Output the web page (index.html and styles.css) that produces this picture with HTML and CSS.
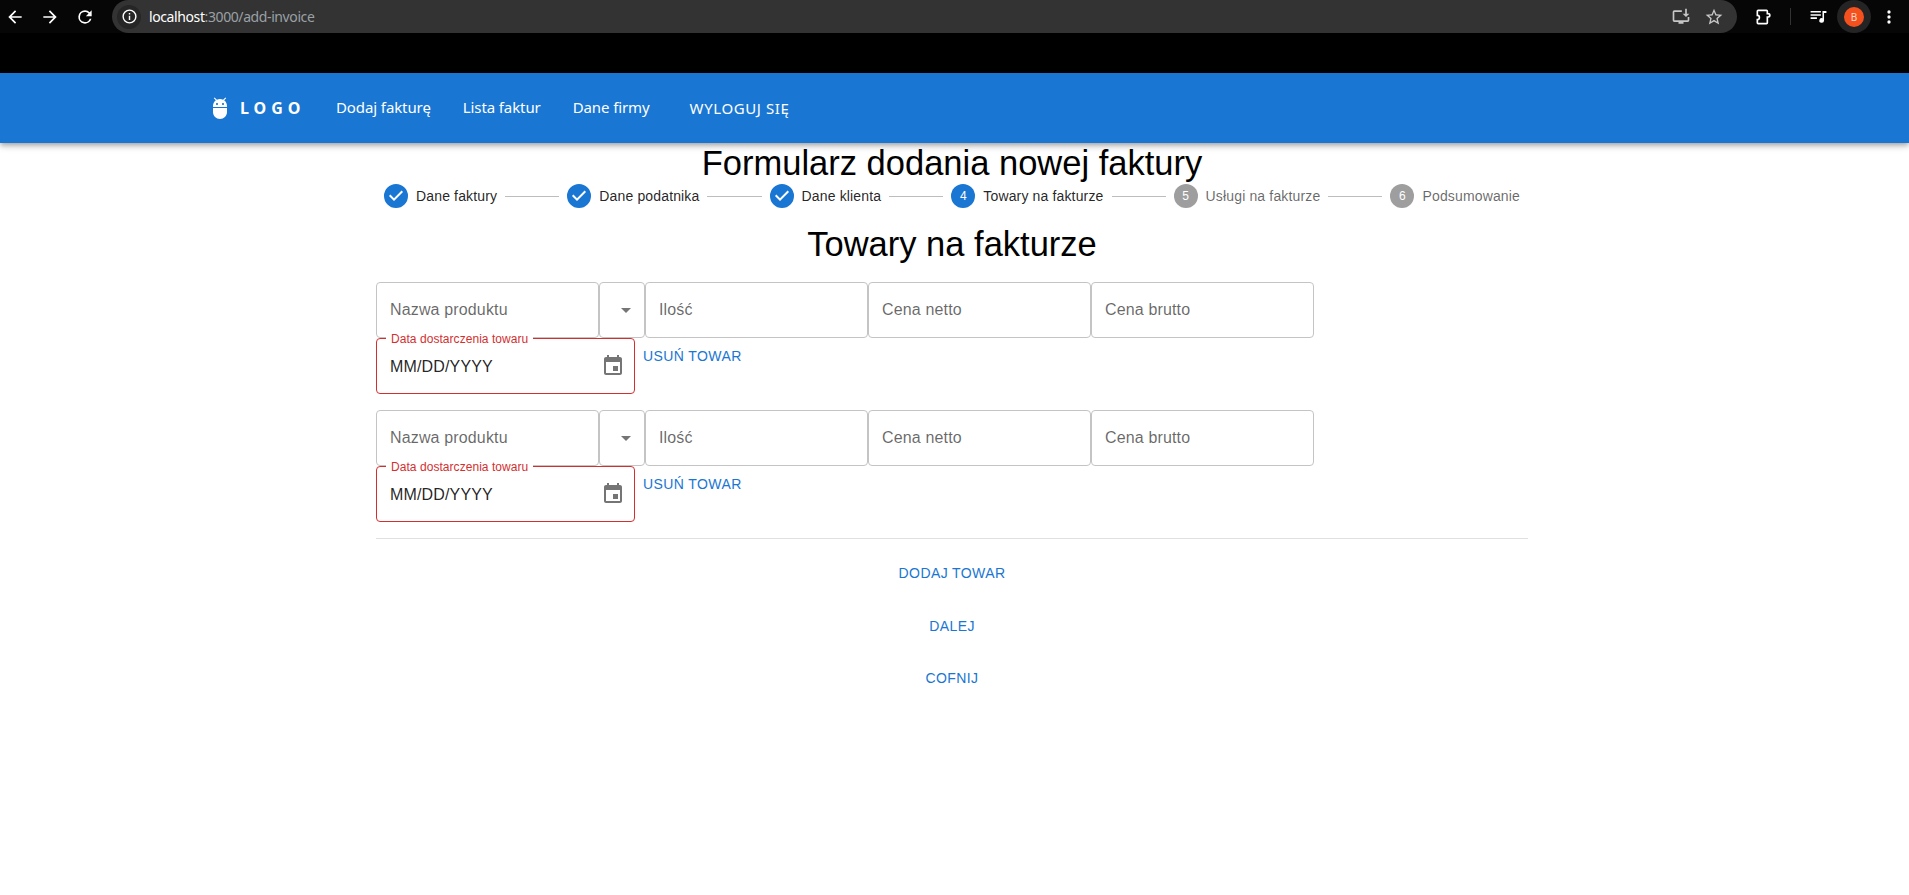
FILE: index.html
```html
<!DOCTYPE html>
<html lang="en">
<head>
    <meta charset="UTF-8">
    <meta name="viewport" content="width=device-width, initial-scale=1.0">
    <title>Formularz dodania nowej faktury</title>
    <link rel="stylesheet" href="styles.css">
</head>
<body>

<div class="browser-bar">
    <div class="browser-nav">
        <svg class="browser-icon" viewBox="0 0 24 24"><path d="M20 11H7.830l5.590-5.590L12 4l-8 8 8 8 1.410-1.410L7.830 13H20z"/></svg>
        <svg class="browser-icon" viewBox="0 0 24 24"><path d="M4 11h12.170l-5.590-5.590L12 4l8 8-8 8-1.410-1.410L16.170 13H4z"/></svg>
        <svg class="browser-icon" viewBox="0 0 24 24"><path d="M17.650 6.350A7.960 7.960 0 0 0 12 4a8 8 0 1 0 7.730 10h-2.080A6 6 0 1 1 12 6c1.660 0 3.140.69 4.220 1.780L13 11h7V4z"/></svg>
    </div>
    <div class="address-bar">
        <span class="info-chip">
            <svg viewBox="0 0 24 24"><path d="M11 7h2v2h-2zm0 4h2v6h-2zm1-9a10 10 0 1 0 0 20 10 10 0 0 0 0-20zm0 18a8 8 0 1 1 0-16 8 8 0 0 1 0 16z"/></svg>
        </span>
        <span class="url"><span class="url-host">localhost</span>:3000/add-invoice</span>
        <span class="address-actions">
            <svg class="address-icon" viewBox="0 0 24 24"><path d="M4 4h9v2H4v10h16v-4h2v4a2 2 0 0 1-2 2h-5v2H9v-2H4a2 2 0 0 1-2-2V6a2 2 0 0 1 2-2zm13-2h2v6h3l-4 4-4-4h3z"/></svg>
            <svg class="address-icon" viewBox="0 0 24 24"><path d="M22 9.240l-7.190-.62L12 2 9.190 8.630 2 9.240l5.460 4.730L5.820 21 12 17.270 18.180 21l-1.630-7.030L22 9.240zM12 15.400l-3.760 2.270 1-4.280-3.320-2.880 4.380-.38L12 6.100l1.710 4.040 4.380.38-3.320 2.880 1 4.280L12 15.400z"/></svg>
        </span>
    </div>
    <div class="browser-tools">
        <svg class="browser-icon puzzle" viewBox="0 0 24 24"><path d="M5 4h10a1 1 0 0 1 1 1v3h1a2 2 0 0 1 0 4h-1v7a1 1 0 0 1-1 1H5a1 1 0 0 1-1-1v-4a2.500 2.500 0 0 0 0-5V5a1 1 0 0 1 1-1z" fill="none" stroke="#fff" stroke-width="2"/></svg>
        <span class="tools-divider"></span>
        <svg class="browser-icon media" viewBox="0 0 24 24"><path d="M2 5h13v2H2zm0 4h13v2H2zm0 4h8v2H2zm15-8h5v2.500h-3V17a3 3 0 1 1-2-2.800z"/></svg>
        <span class="avatar-wrap"><span class="avatar">B</span></span>
        <svg class="browser-icon dots" viewBox="0 0 24 24"><path d="M12 8a2 2 0 1 0 0-4 2 2 0 0 0 0 4zm0 2a2 2 0 1 0 0 4 2 2 0 0 0 0-4zm0 6a2 2 0 1 0 0 4 2 2 0 0 0 0-4z"/></svg>
    </div>
</div>
<div class="black-strip"></div>

<header class="app-bar">
    <svg class="logo-icon" viewBox="0 0 24 24"><path d="M5 16c0 3.870 3.130 7 7 7s7-3.130 7-7v-4H5v4zM16.120 4.370l2.100-2.100-.82-.83-2.300 2.310C14.160 3.280 13.120 3 12 3s-2.160.28-3.090.75L6.600 1.440l-.82.83 2.100 2.100C6.140 5.640 5 7.680 5 10v1h14v-1c0-2.320-1.140-4.360-2.880-5.630zM9 9c-.55 0-1-.45-1-1s.45-1 1-1 1 .45 1 1-.45 1-1 1zm6 0c-.55 0-1-.45-1-1s.45-1 1-1 1 .45 1 1-.45 1-1 1z"/></svg>
    <span class="logo-text">LOGO</span>
    <nav class="nav-links">
        <a class="nav-link">Dodaj fakturę</a>
        <a class="nav-link">Lista faktur</a>
        <a class="nav-link">Dane firmy</a>
    </nav>
    <a class="logout">WYLOGUJ SIĘ</a>
</header>

<main class="page">
    <h1 class="title">Formularz dodania nowej faktury</h1>

    <div class="stepper">
        <div class="step">
            <svg class="step-check" viewBox="0 0 24 24"><path d="M12 0a12 12 0 1 0 0 24 12 12 0 0 0 0-24zm-2 17l-5-5 1.400-1.400 3.600 3.600 7.600-7.600L19 8l-9 9z"/></svg>
            <span class="step-label">Dane faktury</span>
        </div>
        <div class="connector"></div>
        <div class="step">
            <svg class="step-check" viewBox="0 0 24 24"><path d="M12 0a12 12 0 1 0 0 24 12 12 0 0 0 0-24zm-2 17l-5-5 1.400-1.400 3.600 3.600 7.600-7.600L19 8l-9 9z"/></svg>
            <span class="step-label">Dane podatnika</span>
        </div>
        <div class="connector"></div>
        <div class="step">
            <svg class="step-check" viewBox="0 0 24 24"><path d="M12 0a12 12 0 1 0 0 24 12 12 0 0 0 0-24zm-2 17l-5-5 1.400-1.400 3.600 3.600 7.600-7.600L19 8l-9 9z"/></svg>
            <span class="step-label">Dane klienta</span>
        </div>
        <div class="connector"></div>
        <div class="step">
            <span class="step-num active">4</span>
            <span class="step-label">Towary na fakturze</span>
        </div>
        <div class="connector"></div>
        <div class="step">
            <span class="step-num">5</span>
            <span class="step-label muted">Usługi na fakturze</span>
        </div>
        <div class="connector"></div>
        <div class="step">
            <span class="step-num">6</span>
            <span class="step-label muted">Podsumowanie</span>
        </div>
    </div>

    <h2 class="subtitle">Towary na fakturze</h2>

    <section class="product">
        <div class="field-row">
            <div class="field wide">Nazwa produktu</div>
            <div class="field select"><svg viewBox="0 0 24 24"><path d="M7 10l5 5 5-5z"/></svg></div>
            <div class="field wide">Ilość</div>
            <div class="field wide">Cena netto</div>
            <div class="field wide">Cena brutto</div>
        </div>
        <div class="date-row">
            <div class="date-field">
                <span class="date-label">Data dostarczenia towaru</span>
                <span class="date-value">MM/DD/YYYY</span>
                <svg class="date-icon" viewBox="0 0 24 24"><path d="M17 12h-5v5h5v-5zM16 1v2H8V1H6v2H5c-1.110 0-1.990.9-1.990 2L3 19c0 1.100.89 2 2 2h14c1.100 0 2-.9 2-2V5c0-1.100-.9-2-2-2h-1V1h-2zm3 18H5V8h14v11z"/></svg>
            </div>
            <button class="text-btn">Usuń towar</button>
        </div>
    </section>

    <section class="product">
        <div class="field-row">
            <div class="field wide">Nazwa produktu</div>
            <div class="field select"><svg viewBox="0 0 24 24"><path d="M7 10l5 5 5-5z"/></svg></div>
            <div class="field wide">Ilość</div>
            <div class="field wide">Cena netto</div>
            <div class="field wide">Cena brutto</div>
        </div>
        <div class="date-row">
            <div class="date-field">
                <span class="date-label">Data dostarczenia towaru</span>
                <span class="date-value">MM/DD/YYYY</span>
                <svg class="date-icon" viewBox="0 0 24 24"><path d="M17 12h-5v5h5v-5zM16 1v2H8V1H6v2H5c-1.110 0-1.990.9-1.990 2L3 19c0 1.100.89 2 2 2h14c1.100 0 2-.9 2-2V5c0-1.100-.9-2-2-2h-1V1h-2zm3 18H5V8h14v11z"/></svg>
            </div>
            <button class="text-btn">Usuń towar</button>
        </div>
    </section>

    <hr class="divider">

    <div class="actions">
        <button class="text-btn">Dodaj towar</button>
        <button class="text-btn">Dalej</button>
        <button class="text-btn">Cofnij</button>
    </div>
</main>

</body>
</html>
```

FILE: styles.css
```css
* { margin: 0; padding: 0; box-sizing: border-box; }
html, body { height: 100%; }
body { background: #fff; color: #000; font-family: "Liberation Sans", Arial, sans-serif; overflow: hidden; }

/* browser chrome */
.browser-bar { height: 33px; background: #060606; display: flex; align-items: center; }
.browser-nav { display: flex; align-items: center; gap: 15px; padding-left: 5px; width: 112px; flex-shrink: 0; }
.browser-icon { width: 20px; height: 20px; fill: #fff; flex-shrink: 0; }
.address-bar { width: 1625px; height: 33px; background: #333; border-radius: 17px; display: flex; align-items: center; padding-left: 5px; flex-shrink: 0; }
.info-chip { width: 24px; height: 24px; border-radius: 50%; background: #262626; display: flex; align-items: center; justify-content: center; margin-right: 8px; }
.info-chip svg { width: 17px; height: 17px; fill: #fff; }
.url { font-family: "Noto Sans", sans-serif; font-size: 14px; color: #9aa0a6; letter-spacing: -0.4px; }
.url-host { color: #fff; }
.address-actions { margin-left: auto; display: flex; align-items: center; gap: 13px; padding-right: 13px; }
.address-icon { width: 20px; height: 20px; fill: #c7c7c7; }
.browser-tools { display: flex; align-items: center; padding-left: 17px; flex: 1; }
.tools-divider { width: 1px; height: 17px; background: #333; margin: 0 18px 0 16px; }
.media { width: 19px; height: 19px; }
.avatar-wrap { width: 34px; height: 33px; border-radius: 50%; background: #242424; display: flex; align-items: center; justify-content: center; margin-left: 9px; }
.avatar { width: 20px; height: 20px; border-radius: 50%; background: #f4511e; color: #ffd9cc; font-family: "Noto Sans", sans-serif; font-size: 10px; display: flex; align-items: center; justify-content: center; }
.dots { margin-left: 8px; }
.black-strip { height: 40px; background: #000; }

/* app bar */
.app-bar { height: 70px; background: #1976d2; color: #fff; display: flex; align-items: center; padding-left: 208px; box-shadow: 0 2px 4px -1px rgba(0,0,0,.2), 0 4px 5px 0 rgba(0,0,0,.14), 0 1px 10px 0 rgba(0,0,0,.12); position: relative; }
.logo-icon { width: 24px; height: 24px; fill: #fff; margin-right: 8px; }
.logo-text { font-family: "Noto Sans", sans-serif; font-weight: 700; font-size: 16px; letter-spacing: 5px; width: 80px; }
.nav-links { display: flex; margin-bottom: 3px; }
.nav-link { font-family: "Noto Sans", sans-serif; font-size: 15px; padding: 0 16px; letter-spacing: -0.1px; }
.logout { font-family: "Noto Sans", sans-serif; font-size: 15px; margin-left: 24px; letter-spacing: 0.6px; margin-bottom: 1px; }

/* form page */
.page { width: 1152px; margin-left: 376px; }
.title { font-size: 34.500px; font-weight: 400; text-align: center; line-height: 41px; }
.subtitle { font-size: 34.500px; font-weight: 400; text-align: center; line-height: 41px; margin-top: 16px; margin-bottom: 17px; }

.stepper { display: flex; align-items: center; height: 24px; }
.step { display: flex; align-items: center; padding: 0 8px; }
.step-check { width: 24px; height: 24px; fill: #1976d2; margin-right: 8px; }
.step-num { width: 24px; height: 24px; border-radius: 50%; background: #9e9e9e; color: #fff; font-size: 12px; display: flex; align-items: center; justify-content: center; margin-right: 8px; }
.step-num.active { background: #1976d2; }
.step-label { font-size: 14px; letter-spacing: 0.15px; color: rgba(0,0,0,.87); white-space: nowrap; }
.step-label.muted { color: rgba(0,0,0,.6); }
.connector { flex: 1; border-top: 1px solid #bdbdbd; }

.product { margin-bottom: 16px; }
.field-row { display: flex; }
.field { height: 56px; border: 1px solid #c4c4c4; border-radius: 4px; font-size: 16px; letter-spacing: 0.15px; color: rgba(0,0,0,.6); display: flex; align-items: center; }
.field.wide { width: 223px; padding-left: 13px; }
.field.select { width: 46px; justify-content: flex-end; padding-right: 6px; }
.field.select svg { width: 24px; height: 24px; fill: #757575; }

.date-row { display: flex; align-items: flex-start; }
.date-field { width: 259px; height: 56px; border: 1px solid #d32f2f; border-radius: 4px; display: flex; align-items: center; padding: 2px 9px 0 13px; position: relative; }
.date-label { position: absolute; left: 9px; top: -6px; padding: 0 5px; background: #fff; color: #d32f2f; font-size: 12px; line-height: 12px; letter-spacing: 0.05px; }
.date-value { font-size: 16px; letter-spacing: 0.15px; color: rgba(0,0,0,.87); }
.date-icon { width: 24px; height: 24px; fill: #757575; margin-left: auto; margin-top: -2px; }

.text-btn { display: block; background: none; border: 0; color: #1976d2; font-family: "Liberation Sans", Arial, sans-serif; font-size: 14px; text-transform: uppercase; letter-spacing: 0.4px; line-height: 24.500px; padding: 6px 8px; }

.divider { border: 0; border-top: 1px solid #e0e0e0; }
.actions { display: flex; flex-direction: column; align-items: center; gap: 16px; margin-top: 16px; }
```
